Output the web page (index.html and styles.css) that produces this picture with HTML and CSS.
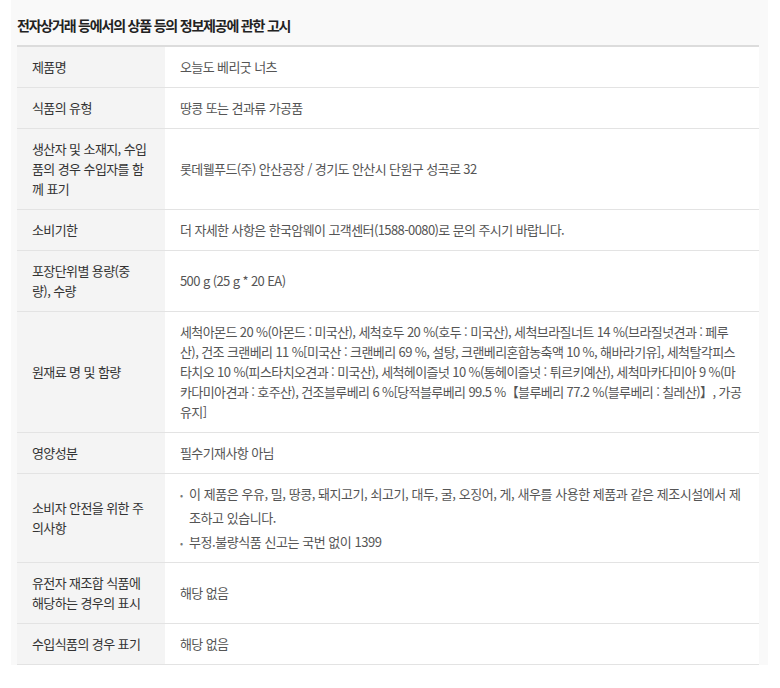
FILE: index.html
```html
<!DOCTYPE html>
<html lang="ko">
<head>
<meta charset="utf-8">
<title>상품정보제공 고시</title>
<link rel="stylesheet" href="styles.css">
</head>
<body>
<div class="panel">
  <h2 class="title">전자상거래 등에서의 상품 등의 정보제공에 관한 고시</h2>
  <table class="info">
    <tr><th>제품명</th><td>오늘도 베리굿 너츠</td></tr>
    <tr><th>식품의 유형</th><td>땅콩 또는 견과류 가공품</td></tr>
    <tr><th>생산자 및 소재지, 수입품의 경우 수입자를 함께 표기</th><td>롯데웰푸드(주) 안산공장 / 경기도 안산시 단원구 성곡로 32</td></tr>
    <tr><th>소비기한</th><td>더 자세한 사항은 한국암웨이 고객센터(1588-0080)로 문의 주시기 바랍니다.</td></tr>
    <tr><th>포장단위별 용량(중<br>량), 수량</th><td>500 g (25 g * 20 EA)</td></tr>
    <tr><th>원재료 명 및 함량</th><td>세척아몬드 20 %(아몬드 : 미국산), 세척호두 20 %(호두 : 미국산), 세척브라질너트 14 %(브라질넛견과 : 페루산), 건조 크랜베리 11 %[미국산 : 크랜베리 69 %, 설탕, 크랜베리혼합농축액 10 %, 해바라기유], 세척탈각피스타치오 10 %(피스타치오견과 : 미국산), 세척헤이즐넛 10 %(통헤이즐넛 : 튀르키예산), 세척마카다미아 9 %(마카다미아견과 : 호주산), 건조블루베리 6 %[당적블루베리 99.5 %【블루베리 77.2 %(블루베리 : 칠레산)】, 가공유지]</td></tr>
    <tr><th>영양성분</th><td>필수기재사항 아님</td></tr>
    <tr><th>소비자 안전을 위한 주의사항</th><td class="listcell"><ul class="notes"><li>이 제품은 우유, 밀, 땅콩, 돼지고기, 쇠고기, 대두, 굴, 오징어, 게, 새우를 사용한 제품과 같은 제조시설에서 제조하고 있습니다.</li><li>부정.불량식품 신고는 국번 없이 1399</li></ul></td></tr>
    <tr><th>유전자 재조합 식품에 해당하는 경우의 표시</th><td>해당 없음</td></tr>
    <tr><th>수입식품의 경우 표기</th><td>해당 없음</td></tr>
  </table>
</div>
</body>
</html>
```

FILE: styles.css
```css
body {
  margin: 0;
  background: #ffffff;
  font-family: "Noto Sans CJK KR", "Noto Sans", sans-serif;
}

.panel {
  margin-left: 11px;
  width: 757px;
  box-sizing: border-box;
  padding: 14px 9px 0 6px;
  background: #f9f9f9;
}

.title {
  margin: 0 0 9px;
  font-size: 14px;
  line-height: 22px;
  font-weight: 700;
  color: #222;
  letter-spacing: -1.2px;
}

.info {
  width: 100%;
  border-collapse: collapse;
  border-top: 2px solid #dcdcdc;
  background: #ffffff;
  font-size: 13px;
  line-height: 20px;
}

.info th,
.info td {
  padding: 10px 15px;
  border-bottom: 1px solid #e3e3e3;
  vertical-align: middle;
  text-align: left;
}

.info th {
  width: 118px;
  background: #f4f4f4;
  color: #333;
  font-weight: 400;
  letter-spacing: -0.6px;
}

.info td {
  padding-right: 13px;
  color: #555;
  letter-spacing: -0.6px;
}

.info td.listcell {
  padding-top: 8px;
  padding-bottom: 8px;
}

.notes {
  margin: 0;
  padding: 0 0 0 9px;
  list-style: none;
  line-height: 24px;
  letter-spacing: -0.45px;
}

.notes li::before {
  content: "•";
  display: inline-block;
  width: 9px;
  margin-left: -9px;
  font-size: 9px;
  line-height: 1;
  color: #777;
}
```
